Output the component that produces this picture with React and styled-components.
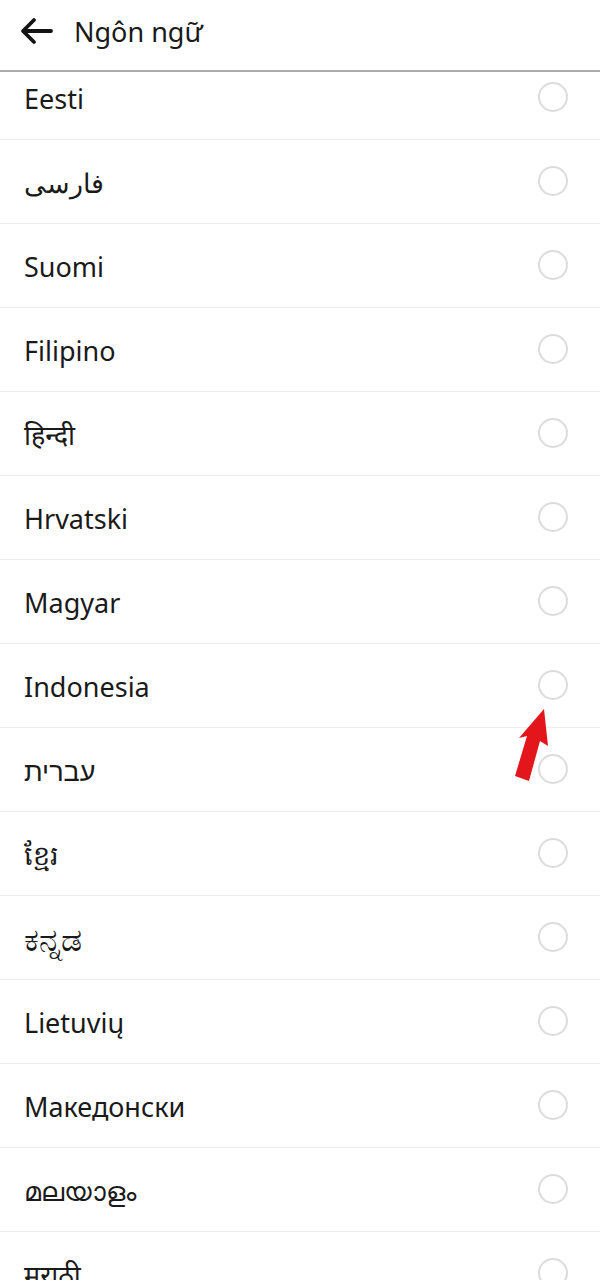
import React from "react";
import styled, { createGlobalStyle } from "styled-components";

const Global = createGlobalStyle`
  html, body { margin: 0; padding: 0; background: #fff; }
  body { font-family: "Noto Sans", "Noto Sans CJK SC", sans-serif; color: #1c1c1c; }
  * { box-sizing: border-box; }
`;

const Page = styled.div`
  position: relative;
  width: 600px;
  height: 1280px;
  overflow: hidden;
  background: #fff;
`;

const Header = styled.header`
  height: 72px;
  display: flex;
  align-items: center;
  gap: 20px;
  padding: 0 0 8px 19px;
  border-bottom: 2px solid #ababab;
`;

const BackButton = styled.button`
  border: 0;
  background: none;
  padding: 0;
  width: 35px;
  height: 30px;
  display: flex;
  align-items: center;
  color: #141414;
`;

const Title = styled.h1`
  margin: 0;
  font-size: 27px;
  font-weight: 400;
  color: #1a1a1a;
`;

const List = styled.ul`
  list-style: none;
  margin: -16px 0 0;
  padding: 0;
`;

const Row = styled.li`
  height: 84px;
  display: flex;
  align-items: center;
  justify-content: space-between;
  padding: 0 32px 0 24px;
  border-bottom: 1px solid #ededed;
`;

const Label = styled.span`
  font-size: ${(p) => p.$size || 27}px;
  line-height: 1;
  color: #1a1a1a;
  padding-top: 2px;
`;

const Radio = styled.span`
  width: 30px;
  height: 30px;
  border-radius: 50%;
  border: 2.5px solid #dcdcde;
  margin-top: -1px;
`;

const Pointer = styled.svg`
  position: absolute;
  left: 505px;
  top: 700px;
  width: 55px;
  height: 90px;
`;

const languages = [
  { name: "Eesti" },
  { name: "فارسی" },
  { name: "Suomi" },
  { name: "Filipino" },
  { name: "हिन्दी" },
  { name: "Hrvatski" },
  { name: "Magyar" },
  { name: "Indonesia" },
  { name: "עברית" },
  { name: "ខ្មែរ" },
  { name: "ಕನ್ನಡ", size: 33 },
  { name: "Lietuvių" },
  { name: "Македонски" },
  { name: "മലയാളം" },
  { name: "मराठी" },
];

export default function App() {
  return (
    <>
      <Global />
      <Page>
        <Header>
          <BackButton aria-label="back">
            <svg width="35" height="30" viewBox="0 0 35 30" fill="none">
              <path
                d="M32 15H5M15 4L4 15L15 26"
                stroke="currentColor"
                strokeWidth="3.8"
                strokeLinecap="round"
                strokeLinejoin="round"
              />
            </svg>
          </BackButton>
          <Title>Ngôn ngữ</Title>
        </Header>
        <List>
          {languages.map((l) => (
            <Row key={l.name}>
              <Label $size={l.size}>{l.name}</Label>
              <Radio />
            </Row>
          ))}
        </List>
        <Pointer viewBox="505 700 55 90">
          <polygon
            points="544,709 548,746 540,741 529,781 515,776 527,736 519,738"
            fill="#e3161b"
          />
        </Pointer>
      </Page>
    </>
  );
}
